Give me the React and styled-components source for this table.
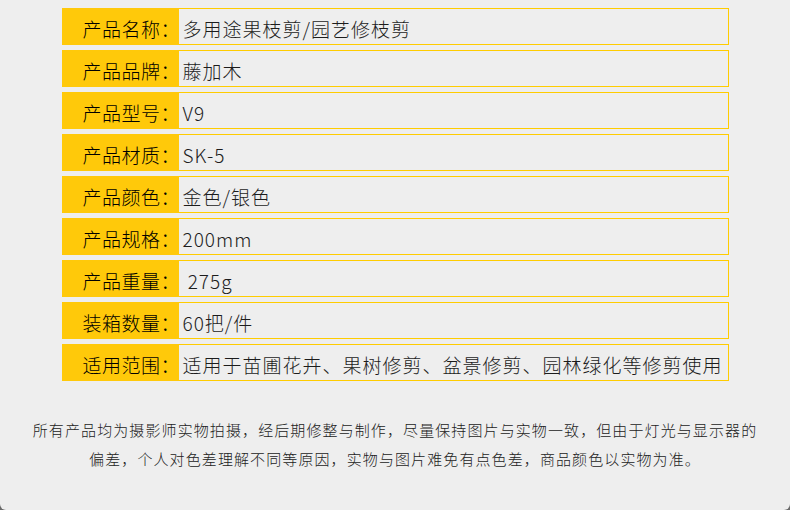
import styled, { createGlobalStyle } from "styled-components";

const GlobalStyle = createGlobalStyle`
  html, body {
    margin: 0;
    padding: 0;
    background: #6a6a6a;
  }
  body {
    font-family: "Noto Sans CJK SC", "Noto Sans", sans-serif;
  }
`;

const Page = styled.div`
  width: 790px;
  height: 510px;
  background: #eeeeee;
  border-radius: 0 0 6px 6px;
  box-sizing: border-box;
  padding-top: 8px;
  overflow: hidden;
`;

const Table = styled.div`
  width: 667px;
  margin: 0 auto;
  display: flex;
  flex-direction: column;
  gap: 5px;
`;

const Row = styled.div`
  display: flex;
  height: 37px;
`;

const Label = styled.div`
  width: 117px;
  flex-shrink: 0;
  background: #ffc90a;
  color: #000000;
  font-size: 19px;
  font-weight: 300;
  letter-spacing: 0.5px;
  display: flex;
  align-items: center;
  padding-left: 21px;
  padding-top: 3px;
  box-sizing: border-box;
  white-space: nowrap;
`;

const Value = styled.div`
  flex: 1;
  border: 1px solid #ffcc00;
  border-left: none;
  color: #1c1c1c;
  font-size: 19px;
  font-weight: 300;
  letter-spacing: 1px;
  display: flex;
  align-items: center;
  padding-left: 4px;
  padding-top: 3px;
  box-sizing: border-box;
  white-space: pre;
`;

const Note = styled.div`
  margin-top: 34px;
  text-align: center;
  color: #222222;
  font-size: 15px;
  font-weight: 300;
  letter-spacing: 1.1px;
  line-height: 29px;
`;

const rows = [
  ["产品名称：", "多用途果枝剪/园艺修枝剪"],
  ["产品品牌：", "藤加木"],
  ["产品型号：", "V9"],
  ["产品材质：", "SK-5"],
  ["产品颜色：", "金色/银色"],
  ["产品规格：", "200mm"],
  ["产品重量：", " 275g"],
  ["装箱数量：", "60把/件"],
  ["适用范围：", "适用于苗圃花卉、果树修剪、盆景修剪、园林绿化等修剪使用"],
];

const App = () => {
  return (
    <>
      <GlobalStyle />
      <Page>
        <Table>
          {rows.map(([label, value]) => (
            <Row key={label}>
              <Label>{label}</Label>
              <Value>{value}</Value>
            </Row>
          ))}
        </Table>
        <Note>
          所有产品均为摄影师实物拍摄，经后期修整与制作，尽量保持图片与实物一致，但由于灯光与显示器的
          <br />
          偏差，个人对色差理解不同等原因，实物与图片难免有点色差，商品颜色以实物为准。
        </Note>
      </Page>
    </>
  );
};

export default App;
